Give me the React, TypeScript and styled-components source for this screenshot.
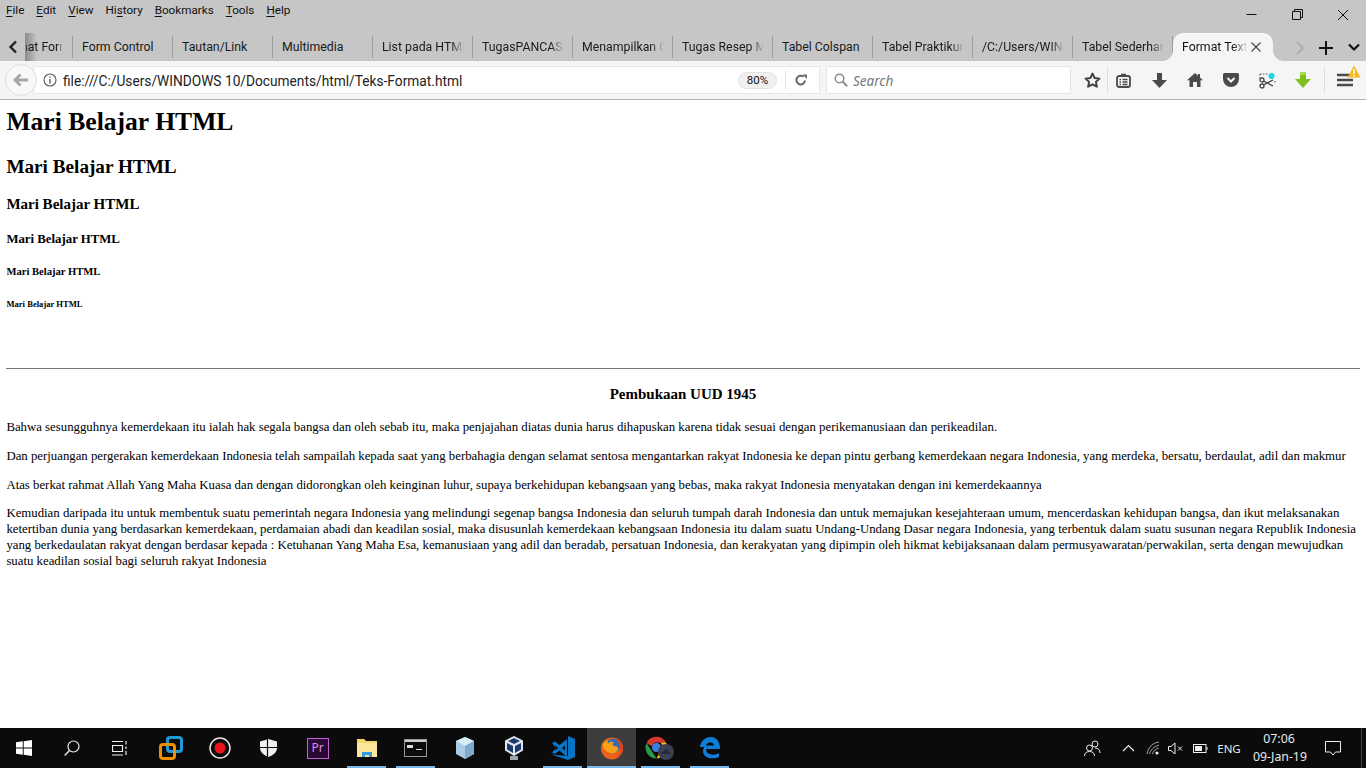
import React from 'react';
import styled, { createGlobalStyle } from 'styled-components';

const GlobalStyle = createGlobalStyle`
    html, body {
        margin: 0;
        padding: 0;
        height: 100%;
        overflow: hidden;
        background: #fff;
    }
`;

const Screen = styled.div`
    display: flex;
    flex-direction: column;
    height: 768px;
    width: 1366px;
    overflow: hidden;
`;

const TitleBar = styled.div`
    background: #c6c6c6;
    height: 61px;
    display: flex;
    flex-direction: column;
    flex: none;
    font-family: Roboto, sans-serif;
`;

const MenuRow = styled.div`
    display: flex;
    height: 33px;
    flex: none;
    justify-content: space-between;
`;

const MenuList = styled.div`
    display: flex;
    padding: 2px 0 0 6px;
    gap: 12px;
    font-size: 11.7px;
    line-height: 16px;
    color: #111;
`;

const MenuItem = styled.span`
    u { text-decoration-thickness: 1px; text-underline-offset: 2px; }
`;

const WindowButtons = styled.div`
    display: flex;
`;

const WindowButton = styled.div`
    width: 46px;
    height: 29px;
    display: flex;
    align-items: center;
    justify-content: center;
`;

const TabRow = styled.div`
    display: flex;
    height: 28px;
    align-items: stretch;
`;

const ScrollLeft = styled.div`
    width: 26px;
    flex: none;
    display: flex;
    align-items: center;
    justify-content: center;
    position: relative;
    &::after {
        content: '';
        position: absolute;
        left: 25px;
        top: 0;
        bottom: 0;
        width: 12px;
        background: linear-gradient(to right, #8a8a8a, rgba(198, 198, 198, 0));
    }
`;

const Tab = styled.div<{ $first?: boolean }>`
    width: ${props => (props.$first ? '47px' : '100px')};
    flex: none;
    box-sizing: border-box;
    display: flex;
    align-items: center;
    padding-left: ${props => (props.$first ? '0' : '9px')};
    position: relative;
    &::after {
        content: '';
        position: absolute;
        right: 0;
        top: 3px;
        height: 22px;
        width: 1px;
        background: #9c9c9c;
    }
`;

const TabLabel = styled.span<{ $fade?: boolean; $scrolled?: boolean }>`
    display: block;
    width: ${props => (props.$scrolled ? '37px' : '82px')};
    overflow: hidden;
    white-space: nowrap;
    font-size: 12.3px;
    line-height: 16px;
    color: #1a1a1a;
    text-indent: ${props => (props.$scrolled ? '-27px' : '0')};
    ${props => props.$fade && 'mask-image: linear-gradient(to right, #000 84%, transparent 100%);'}
`;

const ActiveTab = styled.div`
    width: 100px;
    flex: none;
    box-sizing: border-box;
    padding-left: 9px;
    display: flex;
    align-items: center;
    background: #f5f5f5;
    border-radius: 10px 10px 0 0;
    position: relative;
    &::before, &::after {
        content: '';
        position: absolute;
        bottom: 0;
        width: 10px;
        height: 10px;
        background: radial-gradient(circle at 0 0, transparent 9.5px, #f5f5f5 10px);
    }
    &::before { left: -10px; }
    &::after { right: -10px; transform: scaleX(-1); }
`;

const ActiveLabel = styled.span`
    display: block;
    width: 66px;
    overflow: hidden;
    white-space: nowrap;
    font-size: 12.3px;
    line-height: 16px;
    color: #111;
    mask-image: linear-gradient(to right, #000 76%, transparent 100%);
`;

const TabClose = styled.div`
    margin-left: 2px;
    display: flex;
    align-items: center;
`;

const TabTools = styled.div`
    display: flex;
    align-items: center;
    margin-left: 23px;
    gap: 14px;
    padding-top: 1px;
`;

const NavBar = styled.div`
    background: #f5f5f5;
    height: 39px;
    flex: none;
    box-sizing: border-box;
    border-bottom: 1px solid #b4b4b4;
    display: flex;
    align-items: center;
    position: relative;
`;

const BackButton = styled.div`
    position: absolute;
    left: 5px;
    top: 3px;
    width: 32px;
    height: 32px;
    box-sizing: border-box;
    border-radius: 50%;
    border: 1px solid #e0e0e0;
    background: #f8f8f8;
    display: flex;
    align-items: center;
    justify-content: center;
`;

const UrlBar = styled.div`
    margin-left: 33px;
    width: 787px;
    height: 28px;
    flex: none;
    box-sizing: border-box;
    background: #fff;
    border: 1px solid #e6e6e6;
    display: flex;
    align-items: center;
    padding-left: 9px;
    font-family: Roboto, sans-serif;
`;

const UrlText = styled.span`
    margin-left: 6px;
    padding-top: 1px;
    font-size: 13.72px;
    color: #222;
    flex: 1;
    white-space: nowrap;
`;

const ZoomPill = styled.span`
    width: 39px;
    height: 17px;
    box-sizing: border-box;
    border-radius: 9px;
    border: 1px solid #e2e2e2;
    background: #f0f0f0;
    font-size: 11.5px;
    line-height: 15px;
    text-align: center;
    color: #111;
`;

const UrlDivider = styled.span`
    width: 1px;
    height: 18px;
    background: #e0e0e0;
    margin: 0 9px 0 8px;
`;

const ReloadBox = styled.span`
    display: flex;
    width: 16px;
    margin-right: 8px;
`;

const SearchBox = styled.div`
    margin-left: 6px;
    width: 245px;
    height: 28px;
    flex: none;
    box-sizing: border-box;
    background: #fff;
    border: 1px solid #e6e6e6;
    display: flex;
    align-items: center;
    padding-left: 7px;
    gap: 5px;
    font-family: "Noto Sans", sans-serif;
    font-style: italic;
    font-size: 13.5px;
    color: #777;
`;

const SearchLabel = styled.span`
    padding-top: 1px;
`;

const Toolbar = styled.div`
    display: flex;
    align-items: center;
    margin-left: 6px;
`;

const ToolIcon = styled.div<{ $width: number }>`
    width: ${props => props.$width}px;
    height: 24px;
    display: flex;
    align-items: center;
    justify-content: center;
    position: relative;
`;

const ToolDivider = styled.span`
    width: 1px;
    height: 24px;
    background: #dcdcdc;
`;

const WarningBadge = styled.span`
    position: absolute;
    right: 4px;
    top: -3px;
    display: flex;
`;

const Page = styled.main`
    flex: 1;
    min-height: 0;
    background: #fff;
    padding: 7px 6.4px 0;
    font-family: "Liberation Serif", serif;
    color: #000;
    font-size: 12.8px;
    line-height: 16px;
`;

const H1 = styled.h1`
    font-size: 25.6px;
    line-height: 30px;
    margin: 0 0 19px;
`;

const H2 = styled.h2`
    font-size: 19.2px;
    line-height: 22px;
    margin: 0 0 17px;
`;

const H3 = styled.h3`
    font-size: 15px;
    line-height: 18px;
    margin: 0 0 18px;
`;

const H4 = styled.h4`
    font-size: 12.8px;
    line-height: 16px;
    margin: 0 0 18px;
`;

const H5 = styled.h5`
    font-size: 10.6px;
    line-height: 13px;
    margin: 0 0 21px;
`;

const H6 = styled.h6`
    font-size: 8.6px;
    line-height: 11px;
    margin: 0 0 58px;
`;

const Rule = styled.hr`
    margin: 0 0 16px;
    border: 0;
    border-top: 1px solid #777;
    height: 0;
`;

const Title = styled.p`
    text-align: center;
    font-weight: bold;
    font-size: 15px;
    line-height: 18px;
    margin: 0 0 16px;
`;

const Paragraph = styled.p`
    margin: 0 0 12.8px;
`;

const Taskbar = styled.footer`
    height: 40px;
    flex: none;
    background: #0b0b0c;
    display: flex;
    color: #e8e8e8;
    font-family: "Noto Sans", sans-serif;
`;

const SystemButton = styled.div`
    width: 48px;
    height: 40px;
    display: flex;
    align-items: center;
    justify-content: center;
`;

const AppList = styled.div`
    display: flex;
    margin-left: 2px;
`;

const AppButton = styled.div<{ $open?: boolean; $active?: boolean }>`
    width: 49px;
    height: 40px;
    box-sizing: border-box;
    display: flex;
    align-items: center;
    justify-content: center;
    position: relative;
    background: ${props => (props.$active ? '#3d3d3d' : 'transparent')};
    &::after {
        content: '';
        display: ${props => (props.$open ? 'block' : 'none')};
        position: absolute;
        bottom: 0;
        left: ${props => (props.$active ? '0' : '5px')};
        right: ${props => (props.$active ? '0' : '5px')};
        height: 2px;
        background: #76b9ed;
    }
`;

const PremiereBadge = styled.span`
    width: 22px;
    height: 21px;
    box-sizing: border-box;
    border: 1.5px solid #c45fe0;
    background: #2a0a33;
    color: #d58cf0;
    font-family: "Noto Sans", sans-serif;
    font-size: 12px;
    line-height: 17px;
    text-align: center;
`;

const Tray = styled.div`
    margin-left: auto;
    display: flex;
    align-items: center;
`;

const TrayIcon = styled.div<{ $width: number }>`
    width: ${props => props.$width}px;
    height: 40px;
    display: flex;
    align-items: center;
    justify-content: center;
`;

const TrayLang = styled.span`
    font-size: 11.5px;
    width: 36px;
    margin-right: 6px;
    text-align: center;
`;

const Clock = styled.div`
    width: 52px;
    text-align: center;
    font-size: 12.3px;
    line-height: 18px;
    white-space: nowrap;
`;

const DesktopEdge = styled.div`
    width: 5px;
    height: 40px;
    border-left: 1px solid #444;
    box-sizing: border-box;
`;

const Ico = ({ w, h, children }: { w: number; h: number; children: React.ReactNode }) => (
    <svg width={w} height={h} viewBox={`0 0 ${w} ${h}`} fill="none">
        {children}
    </svg>
);

const tabs = ['Form Control', 'Tautan/Link', 'Multimedia', 'List pada HTML', 'TugasPANCASILA', 'Menampilkan Gambar', 'Tugas Resep Makanan', 'Tabel Colspan', 'Tabel Praktikum', '/C:/Users/WINDOWS', 'Tabel Sederhana'];
const noFade = ['Form Control', 'Tautan/Link', 'Multimedia', 'Tabel Colspan'];

const FirefoxLogo = () => (
    <Ico w={24} h={24}>
        <circle cx="12" cy="12.500" r="11" fill="#e9611b" />
        <circle cx="13.500" cy="9.500" r="7" fill="#2f6db5" />
        <path d="M2.500 8c.5 3 1 5 3.500 7 3 2.500 7 3 10 1 2-1.500 2.500-3.500 1.500-5-1-1-3-.5-4.500-1.500-1-1 0-2.500 1.500-3-2.500-1.500-5-1-6.500 1-.7-1-.7-2-.5-3.500C5.500 5 4 6 2.500 8z" fill="#f9a01b" />
        <path d="M15 1.800c4.500 1 8 5 8 10.500 0 5-3.500 9.500-8.500 11 4-2.500 6.500-6 5.800-10.500C19.700 8.500 18 4.500 15 1.800z" fill="#e53f1a" />
    </Ico>
);

const ChromeLogo = () => (
    <Ico w={34} h={28}>
        <path d="M2.500 9A11 11 0 0 1 22 8.500L13 8.500a5 5 0 0 0-5 4z" fill="#d8382c" />
        <path d="M2.500 9l5.500 8.500 4.500 7A11 11 0 0 1 2.500 9z" fill="#2a9a48" />
        <path d="M22 8.500A11 11 0 0 1 12.500 24.500L17 15.500a5 5 0 0 0-.500-7z" fill="#f4c20d" />
        <circle cx="12.500" cy="13.500" r="4.600" fill="#3a7fe0" />
        <circle cx="22" cy="18" r="8" fill="#3c4054" />
        <path d="M17 20c1-4 9-4 10 0zM21 15h2.500v2H21z" fill="#252836" />
    </Ico>
);

const App = () => (
    <Screen>
        <GlobalStyle />
        <TitleBar>
            <MenuRow>
                <MenuList>
                    <MenuItem><u>F</u>ile</MenuItem>
                    <MenuItem><u>E</u>dit</MenuItem>
                    <MenuItem><u>V</u>iew</MenuItem>
                    <MenuItem>Hi<u>s</u>tory</MenuItem>
                    <MenuItem><u>B</u>ookmarks</MenuItem>
                    <MenuItem><u>T</u>ools</MenuItem>
                    <MenuItem><u>H</u>elp</MenuItem>
                </MenuList>
                <WindowButtons>
                    <WindowButton>
                        <Ico w={11} h={11}><path d="M.5 5.500h10" stroke="#111" /></Ico>
                    </WindowButton>
                    <WindowButton>
                        <Ico w={11} h={11}><path d="M.5 2.500h8v8h-8zM2.500 2.500v-2h8v8h-2" stroke="#111" /></Ico>
                    </WindowButton>
                    <WindowButton>
                        <Ico w={12} h={12}><path d="M1 1l10 10M11 1L1 11" stroke="#111" /></Ico>
                    </WindowButton>
                </WindowButtons>
            </MenuRow>
            <TabRow>
                <ScrollLeft>
                    <Ico w={10} h={14}><path d="M8 1.500L2.500 7 8 12.500" stroke="#222" strokeWidth="2.400" /></Ico>
                </ScrollLeft>
                <Tab $first>
                    <TabLabel $scrolled $fade>Format Form</TabLabel>
                </Tab>
                {tabs.map(t => (
                    <Tab key={t}>
                        <TabLabel $fade={!noFade.includes(t)}>{t}</TabLabel>
                    </Tab>
                ))}
                <ActiveTab>
                    <ActiveLabel>Format Text</ActiveLabel>
                    <TabClose>
                        <Ico w={12} h={12}><path d="M1.500 1.500l9 9M10.500 1.500l-9 9" stroke="#444" strokeWidth="1.100" /></Ico>
                    </TabClose>
                </ActiveTab>
                <TabTools>
                    <Ico w={8} h={14}><path d="M1 1l6 6-6 6" stroke="#adadad" strokeWidth="2" /></Ico>
                    <Ico w={16} h={16}><path d="M8 1v14M1 8h14" stroke="#111" strokeWidth="2" /></Ico>
                    <Ico w={12} h={9}><path d="M1 1.500l5 5 5-5" stroke="#111" strokeWidth="2.200" /></Ico>
                </TabTools>
            </TabRow>
        </TitleBar>

        <NavBar>
            <UrlBar>
                <Ico w={14} h={14}>
                    <circle cx="7" cy="7" r="6" stroke="#5a5a5a" strokeWidth="1.100" />
                    <path d="M7 6v4.500M7 3.400v1.400" stroke="#5a5a5a" strokeWidth="1.400" />
                </Ico>
                <UrlText>file:///C:/Users/WINDOWS 10/Documents/html/Teks-Format.html</UrlText>
                <ZoomPill>80%</ZoomPill>
                <UrlDivider />
                <ReloadBox>
                    <Ico w={12} h={12}>
                        <path d="M10 6.500A4.300 4.300 0 1 1 8.500 2.800" stroke="#666" strokeWidth="2" />
                        <path d="M7 0l4.500 0v4.500z" fill="#666" transform="translate(.5 .5)" />
                    </Ico>
                </ReloadBox>
            </UrlBar>
            <BackButton>
                <Ico w={16} h={14}><path d="M7.500 1.500L2 7l5.500 5.500M2.500 7H15" stroke="#a6a6a6" strokeWidth="2.800" /></Ico>
            </BackButton>
            <SearchBox>
                <Ico w={14} h={14}>
                    <circle cx="5.500" cy="5.500" r="4.300" stroke="#8a8a8a" strokeWidth="1.500" />
                    <path d="M8.700 8.700l4.500 4.500" stroke="#8a8a8a" strokeWidth="2" />
                </Ico>
                <SearchLabel>Search</SearchLabel>
            </SearchBox>
            <Toolbar>
                <ToolIcon $width={30}>
                    <Ico w={17} h={16}><path d="M8.500 1.500l2.100 4.500 4.900.6-3.600 3.300 1 4.800-4.400-2.400-4.400 2.400 1-4.800L1.500 6.600l4.900-.6z" stroke="#3f3f3f" strokeWidth="1.900" strokeLinejoin="round" /></Ico>
                </ToolIcon>
                <ToolDivider />
                <ToolIcon $width={30}>
                    <Ico w={15} h={15}>
                        <rect x="1" y="3" width="13" height="11" rx="2" stroke="#4a4a4a" strokeWidth="1.800" />
                        <path d="M5 1.500h5M3.500 6.500h1.500M3.500 9h1.500M3.500 11.500h1.500M6.500 6.500h5M6.500 9h5M6.500 11.500h5" stroke="#4a4a4a" strokeWidth="1.400" />
                    </Ico>
                </ToolIcon>
                <ToolIcon $width={42}>
                    <Ico w={15} h={15}><path d="M5 0h5v7h5l-7.500 8L0 7h5z" fill="#4a4a4a" /></Ico>
                </ToolIcon>
                <ToolIcon $width={30}>
                    <Ico w={16} h={14}><path d="M8 0l3 2.700V1h2v3.500L16 7.200h-2.500V14H10V9H6v5H2.500V7.200H0z" fill="#4a4a4a" /></Ico>
                </ToolIcon>
                <ToolIcon $width={42}>
                    <Ico w={16} h={14}>
                        <path d="M1.500 0h13A1.500 1.500 0 0 1 16 1.500V6a8 8 0 0 1-16 0V1.500A1.500 1.500 0 0 1 1.500 0z" fill="#4a4a4a" />
                        <path d="M4.500 5L8 8.500 11.500 5" stroke="#f5f5f5" strokeWidth="2" />
                    </Ico>
                </ToolIcon>
                <ToolIcon $width={30}>
                    <Ico w={17} h={17}>
                        <circle cx="12.500" cy="4" r="3" fill="#19d3e6" />
                        <path d="M1 2h8M1 2v5M1 13h1M16 9v3" stroke="#555" strokeDasharray="1.500 1.500" />
                        <circle cx="3" cy="14" r="2" stroke="#444" strokeWidth="1.300" />
                        <circle cx="3" cy="8" r="2" stroke="#444" strokeWidth="1.300" />
                        <path d="M4.500 9L14 14M4.500 13L14 8" stroke="#444" strokeWidth="1.300" />
                    </Ico>
                </ToolIcon>
                <ToolIcon $width={42}>
                    <Ico w={16} h={16}>
                        <path d="M5 0h6v7h5l-8 9-8-9h5z" fill="#7cc021" />
                        <path d="M5 0h6v3H5z" fill="#a4dc52" />
                    </Ico>
                </ToolIcon>
                <ToolDivider />
                <ToolIcon $width={40}>
                    <Ico w={16} h={14}>
                        <path d="M0 2h16M0 7h16M0 12h16" stroke="#4a4a4a" strokeWidth="2.600" />
                    </Ico>
                    <WarningBadge>
                        <Ico w={14} h={13}>
                            <path d="M7 .5L13.500 12.500H.5z" fill="#fbb81c" />
                            <path d="M7 4v5M7 10v1.500" stroke="#fff" strokeWidth="1.600" />
                        </Ico>
                    </WarningBadge>
                </ToolIcon>
            </Toolbar>
        </NavBar>

        <Page>
            <H1>Mari Belajar HTML</H1>
            <H2>Mari Belajar HTML</H2>
            <H3>Mari Belajar HTML</H3>
            <H4>Mari Belajar HTML</H4>
            <H5>Mari Belajar HTML</H5>
            <H6>Mari Belajar HTML</H6>
            <Rule />
            <Title>Pembukaan UUD 1945</Title>
            <Paragraph>Bahwa sesungguhnya kemerdekaan itu ialah hak segala bangsa dan oleh sebab itu, maka penjajahan diatas dunia harus dihapuskan karena tidak sesuai dengan perikemanusiaan dan perikeadilan.</Paragraph>
            <Paragraph>Dan perjuangan pergerakan kemerdekaan Indonesia telah sampailah kepada saat yang berbahagia dengan selamat sentosa mengantarkan rakyat Indonesia ke depan pintu gerbang kemerdekaan negara Indonesia, yang merdeka, bersatu, berdaulat, adil dan makmur</Paragraph>
            <Paragraph>Atas berkat rahmat Allah Yang Maha Kuasa dan dengan didorongkan oleh keinginan luhur, supaya berkehidupan kebangsaan yang bebas, maka rakyat Indonesia menyatakan dengan ini kemerdekaannya</Paragraph>
            <Paragraph>Kemudian daripada itu untuk membentuk suatu pemerintah negara Indonesia yang melindungi segenap bangsa Indonesia dan seluruh tumpah darah Indonesia dan untuk memajukan kesejahteraan umum, mencerdaskan kehidupan bangsa, dan ikut melaksanakan ketertiban dunia yang berdasarkan kemerdekaan, perdamaian abadi dan keadilan sosial, maka disusunlah kemerdekaan kebangsaan Indonesia itu dalam suatu Undang-Undang Dasar negara Indonesia, yang terbentuk dalam suatu susunan negara Republik Indonesia yang berkedaulatan rakyat dengan berdasar kepada : Ketuhanan Yang Maha Esa, kemanusiaan yang adil dan beradab, persatuan Indonesia, dan kerakyatan yang dipimpin oleh hikmat kebijaksanaan dalam permusyawaratan/perwakilan, serta dengan mewujudkan suatu keadilan sosial bagi seluruh rakyat Indonesia</Paragraph>
        </Page>

        <Taskbar>
            <SystemButton>
                <Ico w={16} h={16}><path d="M0 2.300L6.800 1.300v6.300H0zM7.700 1.200L16 0v7.600H7.700zM0 8.400h6.800v6.300L0 13.700zM7.700 8.400H16V16l-8.300-1.200z" fill="#fff" /></Ico>
            </SystemButton>
            <SystemButton>
                <Ico w={16} h={16}>
                    <circle cx="9.500" cy="6.500" r="5.500" stroke="#eee" strokeWidth="1.200" />
                    <path d="M5.500 10.500L.7 15.500" stroke="#eee" strokeWidth="1.400" />
                </Ico>
            </SystemButton>
            <SystemButton>
                <Ico w={16} h={16}>
                    <path d="M0.500 5.500h10v6h-10zM0 1.500h11M0 15h11M14 1v3.500M14 6.500v2.500M14 11v4" stroke="#eee" strokeWidth="1.200" />
                </Ico>
            </SystemButton>
            <AppList>
                <AppButton>
                    <Ico w={24} h={24}>
                        <rect x="8.500" y="1.500" width="14" height="14" rx="2.500" stroke="#1d9bd7" strokeWidth="3" />
                        <rect x="1.500" y="8.500" width="14" height="14" rx="2.500" stroke="#ee8f05" strokeWidth="3" />
                    </Ico>
                </AppButton>
                <AppButton>
                    <Ico w={22} h={22}>
                        <circle cx="11" cy="11" r="10" stroke="#e6e6e6" strokeWidth="1.500" />
                        <circle cx="11" cy="11" r="5.500" fill="#e8161c" />
                    </Ico>
                </AppButton>
                <AppButton>
                    <Ico w={17} h={18}>
                        <path d="M8.500 0L17 2.500V9c0 4-4 7.500-8.500 9C4 16.500 0 13 0 9V2.500z" fill="#f0f0f0" />
                        <path d="M7.500 0v18M0 8.500h17" stroke="#0b0b0c" strokeWidth="1.200" />
                    </Ico>
                </AppButton>
                <AppButton>
                    <PremiereBadge>Pr</PremiereBadge>
                </AppButton>
                <AppButton $open>
                    <Ico w={22} h={20}>
                        <path d="M1 1h7l2 2h11v16H1z" fill="#f6d76e" />
                        <path d="M1 5h20v14H1z" fill="#fce69a" />
                        <path d="M6 19v-5h10v5h-3v-2H9v2z" fill="#2f9fe0" />
                    </Ico>
                </AppButton>
                <AppButton $open>
                    <Ico w={23} h={18}>
                        <rect x=".5" y=".5" width="22" height="17" fill="#0c0c0c" stroke="#999" />
                        <path d="M1 1h21v2H1z" fill="#ccc" />
                        <path d="M3 6h6v3H3zM12 10h6v1h-6z" fill="#ddd" />
                    </Ico>
                </AppButton>
                <AppButton>
                    <Ico w={22} h={24}>
                        <path d="M11 1l9 4v13l-9 5-9-5V5z" fill="#a9cbe6" />
                        <path d="M2 5l9 5 9-5-9-4z" fill="#d9edf7" />
                        <path d="M11 10v13l9-5V5z" fill="#7fa9cf" />
                    </Ico>
                </AppButton>
                <AppButton>
                    <Ico w={20} h={24}>
                        <path d="M10 0l9 4.500v10L10 20 1 14.500v-10z" fill="#dfe6ee" />
                        <path d="M10 2l6 3-6 3-6-3z" fill="#1b3a6e" />
                        <path d="M3 7l6 3v7l-6-3.500zM17 7l-6 3v7l6-3.500z" fill="#1b3a6e" />
                        <path d="M6 20h8v4H6z" fill="#9aa7b3" />
                    </Ico>
                </AppButton>
                <AppButton $open>
                    <Ico w={24} h={24}>
                        <path d="M17 0l7 3v18l-7 3-17-5.500L17 20z" fill="#0a74c4" />
                        <path d="M1 7l3-1.500L8.500 9 16 3v18l-7.500-6.500L4 18l-3-1.500L5 12z" fill="#0a74c4" />
                        <path d="M4.500 9.500v5L7 12z" fill="#0b0b0c" />
                        <path d="M11 12l3 2.500v-5z" fill="#0b0b0c" />
                    </Ico>
                </AppButton>
                <AppButton $open $active>
                    <FirefoxLogo />
                </AppButton>
                <AppButton $open>
                    <ChromeLogo />
                </AppButton>
                <AppButton $open>
                    <Ico w={21} h={22}>
                        <path d="M1 10C2 3 7 0 12 0c6 0 9 5 9 12H7c0 6 8 7 13 4v4c-7 3-16 1-16-6 0-2 1-3 1-4 .5 0-1 0-4 0zM7 8.500h8c0-4-7-4-8 0z" fill="#0f7dd8" fillRule="evenodd" />
                    </Ico>
                </AppButton>
            </AppList>
            <Tray>
                <TrayIcon $width={38}>
                    <Ico w={17} h={17}>
                        <circle cx="5.500" cy="8" r="3" stroke="#eee" />
                        <circle cx="11" cy="4" r="3" stroke="#eee" />
                        <path d="M.5 16c0-3 2-4.500 5-4.500s5 1.500 5 4.500M11 8c3 0 5 1.500 5 5" stroke="#eee" />
                    </Ico>
                </TrayIcon>
                <TrayIcon $width={34}>
                    <Ico w={13} h={8}><path d="M1 7l5.500-5.500L12 7" stroke="#eee" strokeWidth="1.200" /></Ico>
                </TrayIcon>
                <TrayIcon $width={16}>
                    <Ico w={14} h={14}>
                        <path d="M1 13C2 7 6 2 13 1M3.500 13c1-4 4-7 9.500-9M6.500 13c.6-2.500 2.500-4.500 6-6" stroke="#aaa" />
                        <circle cx="11" cy="12" r="1.600" fill="#eee" />
                    </Ico>
                </TrayIcon>
                <TrayIcon $width={28}>
                    <Ico w={15} h={13}>
                        <path d="M.5 4.500h2.500L7 1v11L3 8.500H.5z" stroke="#eee" />
                        <path d="M10 4.500l4 4M14 4.500l-4 4" stroke="#eee" />
                    </Ico>
                </TrayIcon>
                <TrayIcon $width={22}>
                    <Ico w={15} h={9}>
                        <rect x=".5" y=".5" width="12.500" height="8" stroke="#eee" />
                        <path d="M2 2h7v5H2z" fill="#eee" />
                        <path d="M13.500 3h1v3h-1z" fill="#eee" />
                    </Ico>
                </TrayIcon>
                <TrayLang>ENG</TrayLang>
                <Clock>
                    07:06
                    <br />
                    09-Jan-19
                </Clock>
                <TrayIcon $width={56}>
                    <Ico w={16} h={15}>
                        <path d="M.5.500h15v10.500h-5L8 14l-2.500-3H.5z" stroke="#eee" />
                    </Ico>
                </TrayIcon>
                <DesktopEdge />
            </Tray>
        </Taskbar>
    </Screen>
);

export default App;
